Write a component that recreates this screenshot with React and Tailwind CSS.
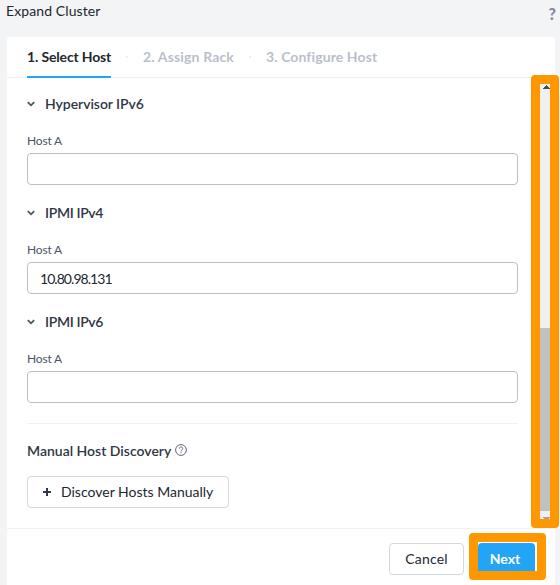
function Chevron() {
  return (
    <svg className="h-[6px] w-[8px]" viewBox="0 0 8 6" fill="none" stroke="#4c5566" strokeWidth="1.8">
      <path d="M0.8 1.2 L4 4.3 L7.2 1.2" />
    </svg>
  );
}

function HostSection({ title, value, titleClass }) {
  return (
    <section className="h-[109px]">
      <div className="flex h-[51px] items-center gap-[10px] text-[14px] font-semibold text-[#2f3645]">
        <Chevron />
        <h2 className={titleClass}>{title}</h2>
      </div>
      <label className="block h-[23px] text-[12px] leading-[23px] tracking-[-0.2px] text-[#4c5566]">Host A</label>
      <div className="mt-px flex h-8 items-center rounded border border-[#b8bfca] bg-white px-3 text-[14px] tracking-[-0.95px] text-[#22272e]">
        {value}
      </div>
    </section>
  );
}

export default function App() {
  return (
    <div className="relative flex h-[585px] w-[560px] flex-col overflow-hidden bg-[#f2f4f6] font-[Lato,sans-serif]">
      <header className="flex h-[37px] shrink-0 justify-between pl-[6px] pr-[4px]">
        <h1 className="pt-px text-[14px] leading-[20px] tracking-[0.1px] text-[#22272e]">Expand Cluster</h1>
        <span className="pt-[4px] text-[16px] font-black leading-[20px] text-[#7d8ba5]">?</span>
      </header>

      <main className="ml-[7px] flex w-[548px] flex-1 flex-col rounded-t-[3px] bg-white">
        <nav className="flex h-[41px] shrink-0 border-b border-[#f0f1f3] pl-5 text-[14px] font-bold text-[#b8bfca]">
          <span className="h-[41px] w-[84px] whitespace-nowrap border-b-2 border-[#22a5f7] leading-[40px] tracking-[-0.15px] text-[#22272e]">1. Select Host</span>
          <span className="flex w-8 items-center justify-center"><i className="size-[2px] bg-[#eceef1]" /></span>
          <span className="w-[91px] whitespace-nowrap leading-[40px] tracking-[0.15px]">2. Assign Rack</span>
          <span className="flex w-8 items-center justify-center"><i className="size-[2px] bg-[#eceef1]" /></span>
          <span className="whitespace-nowrap leading-[40px] tracking-[0.1px]">3. Configure Host</span>
        </nav>

        <div className="flex h-[450px] shrink-0 flex-col pl-5 pr-[37px]">
          <HostSection title="Hypervisor IPv6" titleClass="pb-px tracking-[-0.05px]" />
          <HostSection title="IPMI IPv4" titleClass="pb-px tracking-[-0.35px]" value="10.80.98.131" />
          <HostSection title="IPMI IPv6" titleClass="pb-px tracking-[-0.35px]" />
          <div className="mt-[18px] flex h-[53px] items-center gap-1 border-t border-[#f0f1f3] pt-px text-[14px] font-semibold text-[#2f3645]">
            <span>Manual Host Discovery</span>
            <svg className="mb-[2px] size-3" viewBox="0 0 12 12" fill="none" stroke="#4c5566" strokeWidth="0.9">
              <circle cx="6" cy="6" r="5.4" />
              <path d="M4.3 4.7 C4.3 2.4 7.7 2.4 7.7 4.6 C7.7 5.9 6 5.8 6 7.3 M6 8.2 V9.2" />
            </svg>
          </div>
          <button className="flex h-8 w-[202px] items-center rounded border border-[#d3d8e0] pl-[15px] text-[14px] text-[#22272e]">
            <svg className="mr-[10px] size-2" viewBox="0 0 8 8" stroke="#2f3645" strokeWidth="2">
              <path d="M4 0 V8 M0 4 H8" />
            </svg>
            <span className="whitespace-nowrap pb-px">Discover Hosts Manually</span>
          </button>
        </div>

        <footer className="flex flex-1 gap-[14px] border-t border-[#f0f1f3] pl-[382px] pt-[14px] text-[14px]">
          <button className="h-8 w-[75px] rounded border border-[#d3d8e0] pb-px tracking-[0.15px] text-[#22272e]">Cancel</button>
          <button className="h-8 w-[57px] rounded bg-[#22a5f7] pb-px pr-[3px] font-bold text-white">Next</button>
        </footer>
      </main>

      <div className="absolute left-[531px] top-[75px] h-[453px] w-7 rounded-[4px] bg-[#ff9800] px-[9px] py-[9px]">
        <div className="flex h-[435px] flex-col bg-[#f0f0f0]">
          <svg className="h-[5px] w-[10px]" viewBox="0 0 10 5" fill="#505050" shapeRendering="crispEdges">
            <path d="M3 5 V4 H4 V3 H5 V2 H6 V1 H7 V2 H8 V3 H9 V4 H10 V5 Z" />
          </svg>
          <div className="mt-[239px] h-[183px] bg-[#c1c1c1]" />
          <svg className="mt-[6px] h-[2px] w-[10px]" viewBox="0 0 10 2" fill="#a3a3a3" shapeRendering="crispEdges">
            <path d="M3 0 H10 V1 H9 V2 H4 V1 H3 Z" />
          </svg>
        </div>
      </div>
      <div className="absolute left-[469px] top-[533px] h-[47px] w-[77px] rounded-[4px] border-[9px] border-[#ff9800]" />
    </div>
  );
}
